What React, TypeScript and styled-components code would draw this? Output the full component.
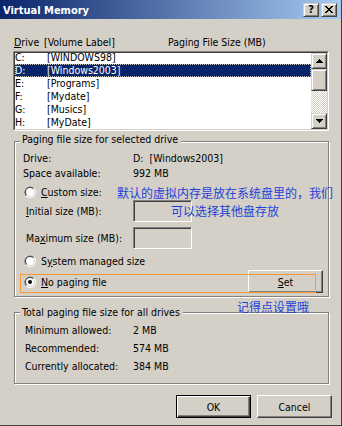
import React from "react";
import styled, { createGlobalStyle, css } from "styled-components";

const GlobalStyle = createGlobalStyle`
  html, body {
    margin: 0;
    padding: 0;
  }
  body {
    background: #d4d0c8;
    font-family: "DejaVu Sans Condensed", "Liberation Sans", Arial, sans-serif;
    font-size: 10.5px;
    color: #000;
  }
  u {
    text-underline-offset: 1px;
  }
`;

// win2k 3d edges
const raisedThin = css`
  border: 1px solid;
  border-color: #d4d0c8 #404040 #404040 #d4d0c8;
  box-shadow: inset 1px 1px 0 #fff, inset -1px -1px 0 #808080;
`;

const Window = styled.div`
  position: relative;
  width: 342px;
  height: 426px;
  box-sizing: border-box;
  background: #d4d0c8;
  border-right: 1px solid #404040;
  border-bottom: 1px solid #404040;
  display: flex;
  flex-direction: column;
  overflow: hidden;
`;

const TitleBar = styled.div`
  height: 19px;
  flex: none;
  display: flex;
  align-items: center;
  padding: 0 4px 0 3px;
  background: linear-gradient(to right, #0a246a, #a6caf0);
`;

const Title = styled.div`
  flex: 1;
  color: #fff;
  font-weight: bold;
  font-size: 11px;
  line-height: 17px;
  padding-top: 2px;
`;

const CaptionButton = styled.div`
  width: 16px;
  height: 14px;
  box-sizing: border-box;
  background: #d4d0c8;
  ${raisedThin};
  display: flex;
  align-items: center;
  justify-content: center;
  font-weight: bold;
  font-size: 11px;
  line-height: 12px;
  & + & {
    margin-left: 2px;
  }
`;

const HeaderRow = styled.div`
  display: grid;
  grid-template-columns: 30px 124px auto;
  margin: 17px 0 0 14px;
  height: 13px;
  line-height: 13px;
  white-space: nowrap;
`;

const ListFrame = styled.div`
  margin: 2px 0 0 13px;
  width: 316px;
  height: 80px;
  box-sizing: border-box;
  border: 1px solid;
  border-color: #808080 #fff #fff #808080;
`;

const ListInner = styled.div`
  height: 100%;
  box-sizing: border-box;
  border: 1px solid;
  border-color: #404040 #d4d0c8 #d4d0c8 #404040;
  background: #fff;
  display: flex;
`;

const Rows = styled.div`
  flex: 1;
  overflow: hidden;
`;

const RowsScroll = styled.div`
  margin-top: -2px;
`;

const DriveRow = styled.div<{ $selected?: boolean }>`
  position: relative;
  display: grid;
  grid-template-columns: 32px auto;
  height: 13px;
  line-height: 13px;
  white-space: nowrap;
  ${(p) =>
    p.$selected &&
    css`
      background: #0a246a;
      color: #fff;
      &::after {
        content: "";
        position: absolute;
        inset: 0;
        border: 1px dotted #c8c4b8;
      }
    `}
`;

const Scrollbar = styled.div`
  width: 16px;
  flex: none;
  display: flex;
  flex-direction: column;
`;

const ScrollButton = styled.div`
  height: 16px;
  flex: none;
  box-sizing: border-box;
  background: #d4d0c8;
  ${raisedThin};
  display: flex;
  align-items: center;
  justify-content: center;
`;

const Thumb = styled.div`
  height: 22px;
  flex: none;
  box-sizing: border-box;
  background: #d4d0c8;
  ${raisedThin};
`;

const Track = styled.div`
  flex: 1;
  background: repeating-conic-gradient(#d4d0c8 0% 25%, #fff 0% 50%) 0 0 / 2px 2px;
`;

const GroupBox = styled.div<{ $mt: number; $pad: string }>`
  position: relative;
  flex: none;
  margin: ${(p) => p.$mt}px 0 0 14px;
  width: 315px;
  box-sizing: border-box;
  border: 1px solid #808080;
  box-shadow: inset 1px 1px 0 #fff, 1px 1px 0 #fff;
  padding: ${(p) => p.$pad};
`;

const Legend = styled.div<{ $top: number }>`
  position: absolute;
  top: ${(p) => p.$top}px;
  left: 5px;
  padding: 0 3px 0 2px;
  background: #d4d0c8;
  line-height: 13px;
  white-space: nowrap;
`;

const InfoRow = styled.div<{ $indent: number; $h: number }>`
  display: grid;
  grid-template-columns: ${(p) => 110 - p.$indent}px auto;
  padding-left: ${(p) => p.$indent}px;
  height: ${(p) => p.$h}px;
  line-height: ${(p) => p.$h}px;
  white-space: nowrap;
`;

const RadioRow = styled.div<{ $mt: number; $h: number }>`
  display: flex;
  align-items: center;
  gap: 5px;
  margin-top: ${(p) => p.$mt}px;
  height: ${(p) => p.$h}px;
  padding-left: 1px;
  white-space: nowrap;
`;

const InputRow = styled.div<{ $mt: number }>`
  display: grid;
  grid-template-columns: 107px 59px;
  align-items: center;
  padding-left: 3px;
  margin-top: ${(p) => p.$mt}px;
  height: 22px;
  white-space: nowrap;
`;

const Field = styled.div`
  width: 59px;
  height: 22px;
  box-sizing: border-box;
  background: #d4d0c8;
  border: 1px solid;
  border-color: #808080 #fff #fff #808080;
  box-shadow: inset 1px 1px 0 #404040, inset -1px -1px 0 #d4d0c8;
`;

const PushButton = styled.div<{ $default?: boolean; $push?: boolean }>`
  width: 75px;
  height: 23px;
  flex: none;
  box-sizing: border-box;
  background: #d4d0c8;
  display: flex;
  align-items: center;
  justify-content: center;
  border: 1px solid;
  border-color: #fff #404040 #404040 #fff;
  box-shadow: inset -1px -1px 0 #808080;
  ${(p) => p.$push && "margin-left: auto;"}
  ${(p) =>
    p.$default &&
    css`
      border-color: #000;
      box-shadow: inset 1px 1px 0 #fff, inset -1px -1px 0 #404040,
        inset -2px -2px 0 #808080;
    `}
`;

const ButtonRow = styled.div`
  display: flex;
  justify-content: flex-end;
  gap: 6px;
  margin-top: 11px;
  padding-right: 9px;
`;

const Note = styled.div<{ $left: number; $top: number; $width?: number }>`
  position: absolute;
  left: ${(p) => p.$left}px;
  top: ${(p) => p.$top}px;
  ${(p) => p.$width && `width: ${p.$width}px;`}
  color: #1e3fd8;
  font-family: "Noto Sans CJK SC", sans-serif;
  font-size: 12px;
  line-height: 18px;
  text-align: center;
  white-space: nowrap;
`;

const Marker = styled.div`
  position: absolute;
  left: 20px;
  top: 274px;
  width: 296px;
  height: 19px;
  box-sizing: border-box;
  border: 1px solid #fb9a36;
  pointer-events: none;
`;

const Radio = ({ checked }: { checked?: boolean }) => (
  <svg width="12" height="12" viewBox="0 0 12 12" style={{ flex: "none" }}>
    <circle cx="6" cy="6" r="6" fill="#fff" />
    <path d="M1.76 10.24 A6 6 0 0 1 10.24 1.76 Z" fill="#808080" />
    <circle cx="6" cy="6" r="5" fill="#d4d0c8" />
    <path d="M2.46 9.54 A5 5 0 0 1 9.54 2.46 Z" fill="#404040" />
    <circle cx="6" cy="6" r="4" fill="#fff" />
    {checked && <circle cx="6" cy="6" r="2" fill="#000" />}
  </svg>
);

const Arrow = ({ down }: { down?: boolean }) => (
  <svg width="7" height="4" viewBox="0 0 7 4" shapeRendering="crispEdges">
    <path d={down ? "M0 0H7L3.5 4Z" : "M3.5 0L7 4H0Z"} fill="#000" />
  </svg>
);

const CloseGlyph = () => {
  const px = [
    [0, 0], [1, 0], [6, 0], [7, 0],
    [1, 1], [2, 1], [5, 1], [6, 1],
    [2, 2], [3, 2], [4, 2], [5, 2],
    [3, 3], [4, 3],
    [2, 4], [3, 4], [4, 4], [5, 4],
    [1, 5], [2, 5], [5, 5], [6, 5],
    [0, 6], [1, 6], [6, 6], [7, 6],
  ];
  return (
    <svg width="8" height="7" viewBox="0 0 8 7" shapeRendering="crispEdges">
      {px.map(([x, y]) => (
        <rect key={`${x}-${y}`} x={x} y={y} width="1" height="1" fill="#000" />
      ))}
    </svg>
  );
};

const drives = [
  ["C:", "[WINDOWS98]"],
  ["D:", "[Windows2003]"],
  ["E:", "[Programs]"],
  ["F:", "[Mydate]"],
  ["G:", "[Musics]"],
  ["H:", "[MyDate]"],
];

const App = () => {
  return (
    <>
      <GlobalStyle />
      <Window>
        <TitleBar>
          <Title>Virtual Memory</Title>
          <CaptionButton>?</CaptionButton>
          <CaptionButton>
            <CloseGlyph />
          </CaptionButton>
        </TitleBar>

        <HeaderRow>
          <span>
            <u>D</u>rive
          </span>
          <span>[Volume Label]</span>
          <span>Paging File Size (MB)</span>
        </HeaderRow>

        <ListFrame>
          <ListInner>
            <Rows>
              <RowsScroll>
                {drives.map(([letter, label]) => (
                  <DriveRow key={letter} $selected={letter === "D:"}>
                    <span>{letter}</span>
                    <span>{label}</span>
                  </DriveRow>
                ))}
              </RowsScroll>
            </Rows>
            <Scrollbar>
              <ScrollButton>
                <Arrow />
              </ScrollButton>
              <Thumb />
              <Track />
              <ScrollButton>
                <Arrow down />
              </ScrollButton>
            </Scrollbar>
          </ListInner>
        </ListFrame>

        <GroupBox $mt={10} $pad="9px 5px 3px 8px">
          <Legend $top={-9}>Paging file size for selected drive</Legend>
          <InfoRow $indent={0} $h={15}>
            <span>Drive:</span>
            <span>D:&nbsp; [Windows2003]</span>
          </InfoRow>
          <InfoRow $indent={0} $h={15}>
            <span>Space available:</span>
            <span>992 MB</span>
          </InfoRow>
          <RadioRow $mt={3} $h={16}>
            <Radio />
            <span>
              <u>C</u>ustom size:
            </span>
          </RadioRow>
          <InputRow $mt={0}>
            <span>
              <u>I</u>nitial size (MB):
            </span>
            <Field />
          </InputRow>
          <InputRow $mt={5}>
            <span>
              Ma<u>x</u>imum size (MB):
            </span>
            <Field />
          </InputRow>
          <RadioRow $mt={4} $h={16}>
            <Radio />
            <span>
              S<u>y</u>stem managed size
            </span>
          </RadioRow>
          <RadioRow $mt={1} $h={23}>
            <Radio checked />
            <span>
              <u>N</u>o paging file
            </span>
            <PushButton $push>
              <span>
                <u>S</u>et
              </span>
            </PushButton>
          </RadioRow>
        </GroupBox>

        <GroupBox $mt={15} $pad="8px 5px 8px 8px">
          <Legend $top={-7}>Total paging file size for all drives</Legend>
          <InfoRow $indent={2} $h={18}>
            <span>Minimum allowed:</span>
            <span>2 MB</span>
          </InfoRow>
          <InfoRow $indent={2} $h={18}>
            <span>Recommended:</span>
            <span>574 MB</span>
          </InfoRow>
          <InfoRow $indent={2} $h={18}>
            <span>Currently allocated:</span>
            <span>384 MB</span>
          </InfoRow>
        </GroupBox>

        <ButtonRow>
          <PushButton $default>OK</PushButton>
          <PushButton>Cancel</PushButton>
        </ButtonRow>

        <Marker />
        <Note $left={117} $top={184} $width={216}>
          默认的虚拟内存是放在系统盘里的，我们
          <br />
          可以选择其他盘存放
        </Note>
        <Note $left={237} $top={298}>
          记得点设置哦
        </Note>
      </Window>
    </>
  );
};

export default App;
